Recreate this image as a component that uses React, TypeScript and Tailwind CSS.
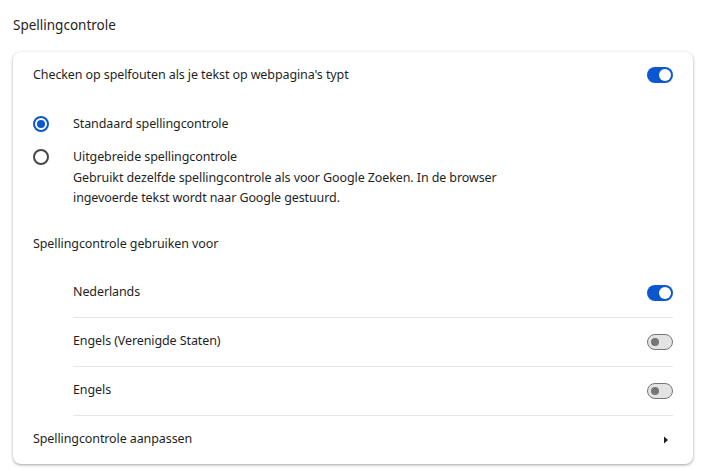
import React from 'react'

const Toggle = ({ on }: { on: boolean }) =>
  on ? (
    <span className="relative inline-block w-[26px] h-[16px] rounded-full bg-[#0b57d0]">
      <span className="absolute right-[2px] top-[2px] w-[12px] h-[12px] rounded-full bg-white" />
    </span>
  ) : (
    <span className="relative inline-block w-[26px] h-[16px] rounded-full bg-[#e3e3e3] border border-[#747775]">
      <span className="absolute left-[3px] top-[3px] w-[8px] h-[8px] rounded-full bg-[#747775]" />
    </span>
  )

const Radio = ({ checked }: { checked: boolean }) => (
  <span
    className={
      checked
        ? 'flex items-center justify-center w-[16px] h-[16px] rounded-full border-2 border-[#0b57d0]'
        : 'flex items-center justify-center w-[16px] h-[16px] rounded-full border-2 border-[#474747]'
    }
  >
    {checked && <span className="w-[8px] h-[8px] rounded-full bg-[#0b57d0]" />}
  </span>
)

const languages = [
  { name: 'Nederlands', on: true },
  { name: 'Engels (Verenigde Staten)', on: false },
  { name: 'Engels', on: false }
]

export default function App() {
  return (
    <div
      className="w-[701px] h-[471px] bg-white pl-[13px] pr-[8px] text-[12.5px] tracking-[-0.1px] text-[#1f1f1f]"
      style={{ fontFamily: '"Noto Sans", "Open Sans", sans-serif' }}
    >
      <div className="h-[52px] flex items-center pb-[2px] text-[13.5px] tracking-normal">
        Spellingcontrole
      </div>
      <div className="rounded-[8px] bg-white shadow-[0_1px_2px_rgba(60,64,67,0.3),0_1px_3px_1px_rgba(60,64,67,0.15)] px-[20px]">
        <div className="h-[46px] flex items-center justify-between">
          <span>Checken op spelfouten als je tekst op webpagina's typt</span>
          <Toggle on={true} />
        </div>

        <div className="pt-[6px] pb-[12px]">
          <div className="h-[40px] flex items-center">
            <span className="w-[40px] flex">
              <Radio checked={true} />
            </span>
            <span>Standaard spellingcontrole</span>
          </div>
          <div className="mt-[3px] flex leading-[20.5px]">
            <span className="w-[40px] h-[20px] flex items-center">
              <Radio checked={false} />
            </span>
            <div>
              <div>Uitgebreide spellingcontrole</div>
              <div>
                Gebruikt dezelfde spellingcontrole als voor Google Zoeken. In de browser
                <br />
                ingevoerde tekst wordt naar Google gestuurd.
              </div>
            </div>
          </div>
        </div>

        <div className="h-[48px] flex items-center">Spellingcontrole gebruiken voor</div>

        <div className="ml-[40px]">
          {languages.map((l) => (
            <div
              key={l.name}
              className="h-[49px] flex items-center justify-between border-b border-[#e6e6e6]"
            >
              <span>{l.name}</span>
              <Toggle on={l.on} />
            </div>
          ))}
        </div>

        <div className="h-[48px] flex items-center justify-between">
          <span>Spellingcontrole aanpassen</span>
          <svg width="20" height="20" viewBox="0 0 20 20" className="mr-[-1px]">
            <path d="M10 6.5 L14 10 L10 13.5 Z" fill="#1f1f1f" />
          </svg>
        </div>
      </div>
    </div>
  )
}
